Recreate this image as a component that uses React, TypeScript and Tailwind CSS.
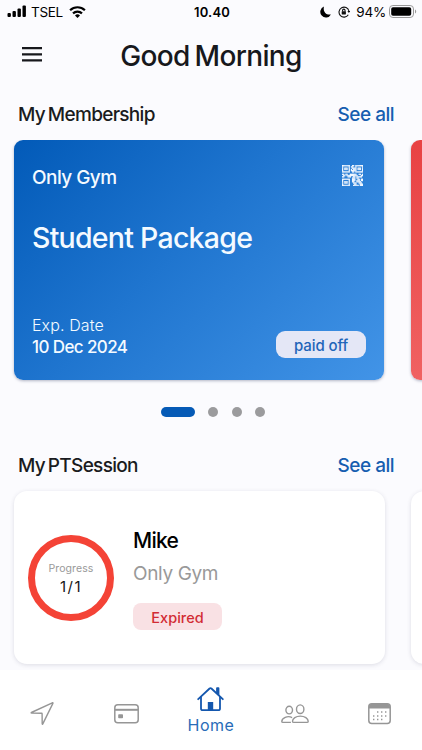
import React from 'react';
import { clsx } from 'clsx';

// Each row is one line of modules in the membership QR glyph
const QR_ROWS = [
  '1111111001101111111',
  '1000001011001000001',
  '1011101001111011101',
  '1011101010111011101',
  '1000001011111000001',
  '1111111001101111111',
  '0000000000000000000',
  '1101100111111001101',
  '0110111111111100011',
  '1100011100110111110',
  '0000000001110110000',
  '1111111001110011011',
  '1000001001110111011',
  '1011101001100111100',
  '1011101000111001110',
  '1000001000011000111',
  '1111111000111110111',
];

function QrIcon() {
  return (
    <svg className="h-[21px] w-[21px]" viewBox="0 0 19 17" preserveAspectRatio="none" fill="#f3f8ff">
      {QR_ROWS.map((row, y) =>
        row.split('').map((cell, x) =>
          cell === '1' ? <rect key={`${x}-${y}`} x={x} y={y} width="1.15" height="1.15" /> : null
        )
      )}
    </svg>
  );
}

function StatusBar() {
  return (
    <div className="grid h-6 grid-cols-3 items-center pl-[7px] pr-[5px] text-black">
      <div className="flex items-center">
        <svg width="19" height="13" viewBox="0 0 19 13">
          <rect x="0.5" y="8" width="3.4" height="4" rx="1" />
          <rect x="5.5" y="6" width="3.4" height="6" rx="1" />
          <rect x="10.5" y="3.5" width="3.4" height="8.5" rx="1" />
          <rect x="15.5" y="0.5" width="3.4" height="11.5" rx="1" />
        </svg>
        <span className="ml-[5px] mt-px text-[13.5px] leading-none tracking-[-0.3px]">TSEL</span>
        <svg className="ml-[6px]" width="17" height="12" viewBox="0 0 17 12" fill="none" stroke="#000" strokeWidth="2.2">
          <path d="M1.1 4.2a10.8 10.8 0 0 1 14.8 0" />
          <path d="M4 7.4a6.5 6.5 0 0 1 9 0" />
          <path d="M8.5 12 6 9.4a3.6 3.6 0 0 1 5 0z" fill="#000" stroke="none" />
        </svg>
      </div>
      <div className="mt-px text-center text-[13px] font-semibold leading-none tracking-[0.2px]">10.40</div>
      <div className="flex items-center justify-end">
        <svg width="11" height="12" viewBox="0 0 11 12">
          <path d="M4 .6A5.6 5.6 0 1 0 10.9 8.4C6.4 9.6 2.6 5.6 4 .6z" />
        </svg>
        <svg className="ml-[7px]" width="12" height="12" viewBox="0 0 12 12" fill="none" stroke="#111" strokeWidth="1.1">
          <path d="M10.3 8.7A5 5 0 1 1 10.9 5" />
          <path d="M9.4 5h2.8l-1.3 1.9z" fill="#111" stroke="none" />
          <rect x="3.7" y="5.2" width="4.2" height="3.2" rx="0.4" fill="#111" stroke="none" />
          <path d="M4.6 5.4V4.3a1.2 1.2 0 0 1 2.4 0v1.1" />
        </svg>
        <span className="ml-[6px] mt-px text-[13.5px] leading-none tracking-[-0.2px]">94%</span>
        <svg className="ml-[3px]" width="28" height="13" viewBox="0 0 28 13">
          <rect x="0.5" y="0.5" width="24" height="12" rx="3.4" fill="none" stroke="#999" />
          <rect x="2.2" y="2.2" width="20" height="8.6" rx="1.8" />
          <path d="M26 4.4c1.6.7 1.6 3.5 0 4.2z" fill="#999" />
        </svg>
      </div>
    </div>
  );
}

function SectionHeading({ title, className }: { title: string; className?: string }) {
  return (
    <div className={clsx('flex items-start justify-between pl-[18px] pr-7 text-[19px] font-medium leading-6', className)}>
      <h2 className="tracking-[-0.7px] text-[#1a1b20] [word-spacing:-1.5px]">{title}</h2>
      <a className="tracking-[-0.5px] text-[#165eb0]">See all</a>
    </div>
  );
}

function MembershipCards() {
  return (
    <div className="flex gap-[27px] overflow-hidden pb-2 pl-[14px]">
      <div className="flex h-60 w-[370px] shrink-0 flex-col rounded-[9px] bg-[linear-gradient(135deg,#025ab8_0%,#1f75cf_45%,#4294e7_100%)] px-[18px] text-[#f4faff] shadow-[0_1px_3px_rgba(40,50,90,0.35)]">
        <div className="mt-[25px] flex items-start justify-between">
          <span className="mt-px text-[19px] font-medium leading-6 tracking-[-0.55px]">Only Gym</span>
          <div className="mr-[3px]">
            <QrIcon />
          </div>
        </div>
        <div className="mt-7 text-[28.5px] font-medium leading-10 tracking-[-0.75px]">Student Package</div>
        <div className="mt-[56px] flex items-start justify-between">
          <div className="leading-[22px]">
            <div className="text-[16px] font-light tracking-[0.1px]">Exp. Date</div>
            <div className="text-[17px] font-medium tracking-[-0.6px]">10 Dec 2024</div>
          </div>
          <div className="mt-[17px] flex h-[27px] w-[90px] items-center justify-center rounded-[9px] bg-[#e4e7f6] pt-[3px] text-[15px] font-medium tracking-[-0.1px] text-[#1f65b9]">
            paid off
          </div>
        </div>
      </div>
      <div className="h-60 w-[370px] shrink-0 rounded-[9px] bg-[linear-gradient(180deg,#e84243,#f06262)] shadow-[0_1px_3px_rgba(40,50,90,0.35)]" />
    </div>
  );
}

function SessionCards() {
  return (
    <div className="flex gap-[26px] overflow-hidden pb-1.5 pl-[14px] pt-[13px]">
      <div className="flex h-[173px] w-[371px] shrink-0 items-start rounded-[13px] bg-white pl-[14px] shadow-[0_1px_4px_rgba(50,50,80,0.15)]">
        <div className="mt-[44px] flex h-[86px] w-[86px] flex-col items-center justify-center rounded-full border-[7px] border-[#f44336]">
          <span className="mt-0.5 text-[10.5px] leading-[14px] tracking-[0.1px] text-[#999]">Progress</span>
          <span className="mt-px text-[15px] leading-5 tracking-[1.4px] text-[#151515]">1/1</span>
        </div>
        <div className="ml-[19px] mt-9">
          <div className="text-[21px] font-medium leading-7 tracking-[-0.75px] text-black">Mike</div>
          <div className="mt-[7px] text-[19px] leading-6 tracking-[-0.35px] text-[#999]">Only Gym</div>
          <div className="mt-[17px] flex h-[27px] w-[89px] items-center justify-center rounded-[8px] bg-[#f9e1e4] pt-0.5 text-[14.5px] font-medium text-[#d22c34]">
            Expired
          </div>
        </div>
      </div>
      <div className="h-[173px] w-[371px] shrink-0 rounded-[13px] bg-white shadow-[0_1px_4px_rgba(50,50,80,0.15)]" />
    </div>
  );
}

function BottomNav() {
  return (
    <nav className="grid h-20 grid-cols-5 bg-white text-[#969696]">
      <div className="flex justify-center pt-[31px]">
        <svg width="24" height="24" viewBox="0 0 24 24" fill="none" stroke="currentColor" strokeWidth="1.4" strokeLinejoin="round">
          <path d="M22.3 1.8 1.4 11.5q-.8.5.2.6l10.1.2q.4 0 .4.4l.1 10.1q.1 1 .6.1L22.9 2.4q.2-.8-.6-.6z" />
        </svg>
      </div>
      <div className="flex justify-center pt-[34px]">
        <svg width="25" height="20" viewBox="0 0 25 20" fill="none" stroke="currentColor" strokeWidth="1.5">
          <rect x="0.8" y="0.8" width="23.4" height="18" rx="3" />
          <path d="M1 5.8h23" strokeWidth="2" />
          <rect x="4.2" y="10.2" width="4.8" height="4" rx="0.8" fill="currentColor" stroke="none" />
        </svg>
      </div>
      <div className="flex flex-col items-center pt-4 text-[#1457ae]">
        <svg width="27" height="26" viewBox="0 0 27 26" fill="none" stroke="currentColor" strokeWidth="1.8" strokeLinejoin="round" strokeLinecap="round">
          <path d="M1.2 13.2 12.6 2.5q.9-.8 1.8 0l11.4 10.7" />
          <path d="M4 11v11.4q0 1.8 1.8 1.8h15.4q1.8 0 1.8-1.8V11" />
          <path d="M20 7V2.2h1.5v6.2" />
          <path d="M10.8 24v-8h5.4v8z" fill="currentColor" stroke="none" />
        </svg>
        <span className="mt-[3px] text-[16px] leading-5 tracking-[0.5px] text-[#286cb8]">Home</span>
      </div>
      <div className="flex justify-center pt-[34px]">
        <svg width="28" height="20" viewBox="0 0 28 20" fill="none" stroke="currentColor" strokeWidth="1.4" strokeLinejoin="round">
          <ellipse cx="8.2" cy="6.1" rx="3.3" ry="3.8" />
          <ellipse cx="19.2" cy="5.2" rx="3.7" ry="4.3" />
          <path d="M11.1 13.6C6.5 11 .8 14.3.8 17.5c0 .7.4.9 1.1.9h8" />
          <path d="M11.5 17.2c0-2.8 3.5-5.1 7.8-5.1s7.9 2.3 7.9 5.1c0 .8-.4 1.2-1.3 1.2H12.8c-.9 0-1.3-.4-1.3-1.2z" />
        </svg>
      </div>
      <div className="flex justify-center pt-[33px]">
        <svg width="23" height="22" viewBox="0 0 23 22" fill="none" stroke="currentColor" strokeWidth="1.5">
          <rect x="0.8" y="0.8" width="21.4" height="19.8" rx="3" />
          <path d="M1 3.4A2.4 2.4 0 0 1 3.4 1h16.2A2.4 2.4 0 0 1 22 3.4v2H1z" fill="currentColor" stroke="none" />
          <path d="M9 9h1.4M13 9h1.4M17 9h1.4M5 13h1.4M9 13h1.4M13 13h1.4M17 13h1.4M5 16.6h1.4M9 16.6h1.4M13 16.6h1.4" />
        </svg>
      </div>
    </nav>
  );
}

export default function App() {
  return (
    <div className="flex h-[750px] w-[422px] flex-col overflow-hidden whitespace-nowrap bg-[#fbfbfe] font-['Inter','Liberation_Sans',sans-serif]">
      <StatusBar />

      {/* Greeting */}
      <header className="grid h-[61px] grid-cols-[90px_1fr_90px] items-center">
        <svg className="ml-[22px]" width="20" height="15" viewBox="0 0 20 15" fill="#17181c">
          <path d="M0 0h20v2.2H0zM0 6.2h20v2.2H0zM0 12.2h20v2.2H0z" />
        </svg>
        <h1 className="pt-[3px] text-center text-[28px] font-medium leading-9 tracking-[-0.65px] text-[#17181c] [word-spacing:-2px]">
          Good Morning
        </h1>
      </header>

      <SectionHeading title="My Membership" className="mb-[13px] mt-[18px]" />
      <MembershipCards />

      {/* Carousel indicator */}
      <div className="mt-5 flex h-[10px] justify-center gap-[13.5px] pl-1">
        <span className="h-[10px] w-[34px] rounded-full bg-[#055ab6]" />
        <span className="h-[10px] w-[10px] rounded-full bg-[#9b9b9d]" />
        <span className="h-[10px] w-[10px] rounded-full bg-[#9b9b9d]" />
        <span className="h-[10px] w-[10px] rounded-full bg-[#9b9b9d]" />
      </div>

      <SectionHeading title="My PTSession" className="mt-[37px]" />
      <SessionCards />
      <BottomNav />
    </div>
  );
}
